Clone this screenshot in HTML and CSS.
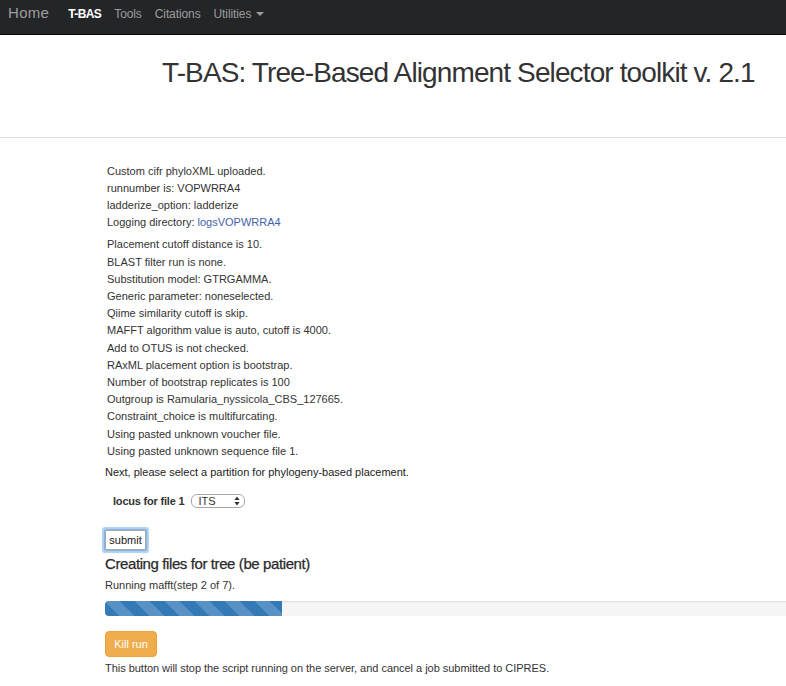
FILE: index.html
```html
<!DOCTYPE html>
<html>
<head>
<meta charset="utf-8">
<title>T-BAS</title>
<link rel="stylesheet" href="styles.css">
</head>
<body>
<nav class="navbar">
  <span class="brand">Home</span>
  <span class="nav-item active">T-BAS</span>
  <span class="nav-item">Tools</span>
  <span class="nav-item">Citations</span>
  <span class="nav-item">Utilities <span class="caret"></span></span>
</nav>
<header class="header">
  <h1 class="title">T-BAS: Tree-Based Alignment Selector toolkit v. 2.1</h1>
</header>
<main class="main">
  <div class="log log-a">
    <div>Custom cifr phyloXML uploaded.</div>
    <div>runnumber is: VOPWRRA4</div>
    <div>ladderize_option: ladderize</div>
    <div>Logging directory: <a class="link" href="#">logsVOPWRRA4</a></div>
  </div>
  <div class="log log-b">
    <div>Placement cutoff distance is 10.</div>
    <div>BLAST filter run is none.</div>
    <div>Substitution model: GTRGAMMA.</div>
    <div>Generic parameter: noneselected.</div>
    <div>Qiime similarity cutoff is skip.</div>
    <div>MAFFT algorithm value is auto, cutoff is 4000.</div>
    <div>Add to OTUS is not checked.</div>
    <div>RAxML placement option is bootstrap.</div>
    <div>Number of bootstrap replicates is 100</div>
    <div>Outgroup is Ramularia_nyssicola_CBS_127665.</div>
    <div>Constraint_choice is multifurcating.</div>
    <div>Using pasted unknown voucher file.</div>
    <div>Using pasted unknown sequence file 1.</div>
  </div>
  <div class="next">Next, please select a partition for phylogeny-based placement.</div>
  <div class="locus-row">
    <span class="locus-label">locus for file 1</span>
    <span class="select">
      <span class="select-text">ITS</span>
      <svg class="select-arrows" width="6" height="10" viewBox="0 0 6 10"><path d="M3 0.5 L5.6 4 L0.4 4 Z M3 9.5 L5.6 6 L0.4 6 Z" fill="#333"/></svg>
    </span>
  </div>
  <button class="submit" type="button">submit</button>
  <h3 class="status-heading">Creating files for tree (be patient)</h3>
  <div class="running">Running mafft(step 2 of 7).</div>
  <div class="progress"><div class="progress-bar" style="width:177px"></div></div>
  <button class="kill" type="button">Kill run</button>
  <div class="note">This button will stop the script running on the server, and cancel a job submitted to CIPRES.</div>
</main>
</body>
</html>
```

FILE: styles.css
```css
html, body {
  margin: 0;
  padding: 0;
  background: #fff;
  overflow: hidden;
}
body {
  font-family: "Liberation Sans", Arial, Helvetica, sans-serif;
  color: #333;
  font-size: 11px;
}
.navbar {
  height: 31px;
  padding-top: 3px;
  background: #242527;
  border-bottom: 1px solid #080808;
  display: flex;
  align-items: baseline;
  padding-left: 8px;
  box-sizing: content-box;
}
.brand {
  font-size: 15px;
  color: #9d9d9d;
  line-height: 20px;
  margin-right: 19px;
  letter-spacing: 0.3px;
}
.nav-item {
  font-size: 12px;
  color: #9d9d9d;
  margin-right: 13px;
  letter-spacing: -0.1px;
}
.nav-item.active {
  color: #fff;
  font-weight: bold;
  letter-spacing: -0.6px;
}
.caret {
  display: inline-block;
  width: 0;
  height: 0;
  border-top: 4px solid #9d9d9d;
  border-left: 4px solid transparent;
  border-right: 4px solid transparent;
  vertical-align: 2px;
  margin-left: 1px;
}
.header {
  padding: 22px 0 49px 162px;
  border-bottom: 1px solid #ddd;
}
.title {
  margin: 0;
  font-size: 28px;
  font-weight: normal;
  line-height: 31px;
  letter-spacing: -0.88px;
  color: #333;
  white-space: nowrap;
}
.main {
  padding-left: 105px;
  display: flex;
  flex-direction: column;
  align-items: flex-start;
}
.log {
  padding-left: 2px;
}
.log-a {
  margin-top: 25px;
  line-height: 17px;
}
.log-b {
  margin-top: 5.4px;
  line-height: 17.2px;
}
.link {
  color: #3f62a9;
  text-decoration: none;
}
.next {
  margin-top: 4px;
  line-height: 17px;
  color: #222;
}
.locus-row {
  margin-top: 12.8px;
  display: flex;
  align-items: center;
  height: 14px;
  padding-left: 8px;
  gap: 7px;
}
.locus-label {
  font-weight: bold;
  line-height: 14px;
  letter-spacing: -0.2px;
}
.select {
  box-sizing: border-box;
  width: 54px;
  height: 14px;
  border: 1px solid #a6a6a6;
  border-radius: 6px;
  display: flex;
  align-items: center;
  justify-content: space-between;
  padding: 0 4px 0 6px;
  background: #fff;
}
.select-text {
  font-size: 11px;
  line-height: 12px;
}
.select-arrows {
  display: block;
}
.submit {
  margin-top: 22px;
  box-sizing: border-box;
  height: 20px;
  width: 41px;
  padding: 0;
  font-family: "Liberation Sans", Arial, sans-serif;
  font-size: 11px;
  color: #222;
  background: #fff;
  border: 1px solid #a8a8a8;
  border-radius: 1px;
  box-shadow: 0 0 0 1px #86b6e6, 0 0 1px 3px #acd0f4;
}
.status-heading {
  margin: 5.6px 0 0;
  font-size: 15px;
  font-weight: normal;
  line-height: 17px;
  letter-spacing: -0.4px;
  color: #2a2a2a;
  -webkit-text-stroke: 0.25px #2a2a2a;
}
.running {
  margin-top: 4.6px;
  line-height: 17px;
}
.progress {
  margin-top: 6.8px;
  align-self: stretch;
  margin-right: -20px;
  height: 15px;
  background: #f5f5f5;
  border-radius: 4px;
  box-shadow: inset 0 1px 2px rgba(0,0,0,.1);
  overflow: hidden;
  display: flex;
}
.progress-bar {
  height: 100%;
  background-color: #337ab7;
  background-image: linear-gradient(45deg, rgba(255,255,255,.18) 25%, transparent 25%, transparent 50%, rgba(255,255,255,.18) 50%, rgba(255,255,255,.18) 75%, transparent 75%, transparent);
  background-size: 30px 30px;
}
.kill {
  margin-top: 15px;
  box-sizing: border-box;
  height: 26px;
  width: 52px;
  padding: 0;
  font-family: "Liberation Sans", Arial, sans-serif;
  font-size: 11px;
  color: #fff;
  background: #f0ad4e;
  border: 1px solid #eea236;
  border-radius: 4px;
}
.note {
  margin-top: 3.4px;
  line-height: 17px;
  white-space: nowrap;
  letter-spacing: -0.03px;
}
```
